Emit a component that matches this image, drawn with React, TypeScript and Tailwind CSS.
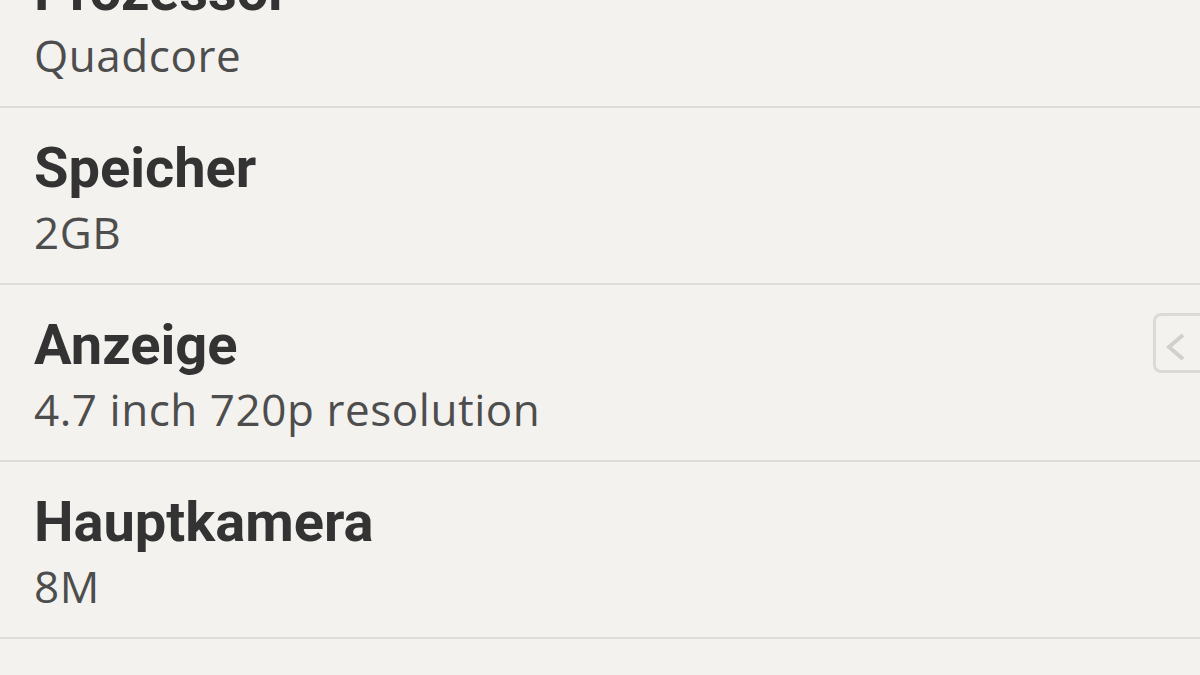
import React from "react";

const rows = [
  { title: "Prozessor", value: "Quadcore" },
  { title: "Speicher", value: "2GB" },
  { title: "Anzeige", value: "4.7 inch 720p resolution" },
  { title: "Hauptkamera", value: "8M" },
  { title: "Frontkamera", value: "2M" },
];

export default function App() {
  return (
    <div className="relative w-[1200px] h-[675px] overflow-hidden bg-[#f3f2ef]">
      <div className="flex flex-col -mt-[69px]">
        {rows.map((r) => (
          <div
            key={r.title}
            className="h-[177px] border-b-2 border-[#dfddd9] pl-[34px] pt-[30px]"
          >
            <div
              className="text-[56px] leading-[60px] font-bold text-[#333333]"
              style={{ fontFamily: 'Roboto, "Open Sans", sans-serif' }}
            >
              {r.title}
            </div>
            <div
              className="mt-[9px] text-[44px] leading-[50px] text-[#4d4d4d] tracking-[0.55px]"
              style={{ fontFamily: '"Open Sans", "DejaVu Sans", sans-serif' }}
            >
              {r.value}
            </div>
          </div>
        ))}
      </div>
      <div className="absolute left-[1153px] top-[313px] w-[60px] h-[60px] rounded-[8px] border-[3px] border-[#dcdad6] flex items-center pl-[8px] pt-[8px]">
        <svg width="22" height="30" viewBox="0 0 22 30">
          <path d="M19 3 L5 15 L19 27" fill="none" stroke="#d2d0cb" strokeWidth="4" />
        </svg>
      </div>
    </div>
  );
}
